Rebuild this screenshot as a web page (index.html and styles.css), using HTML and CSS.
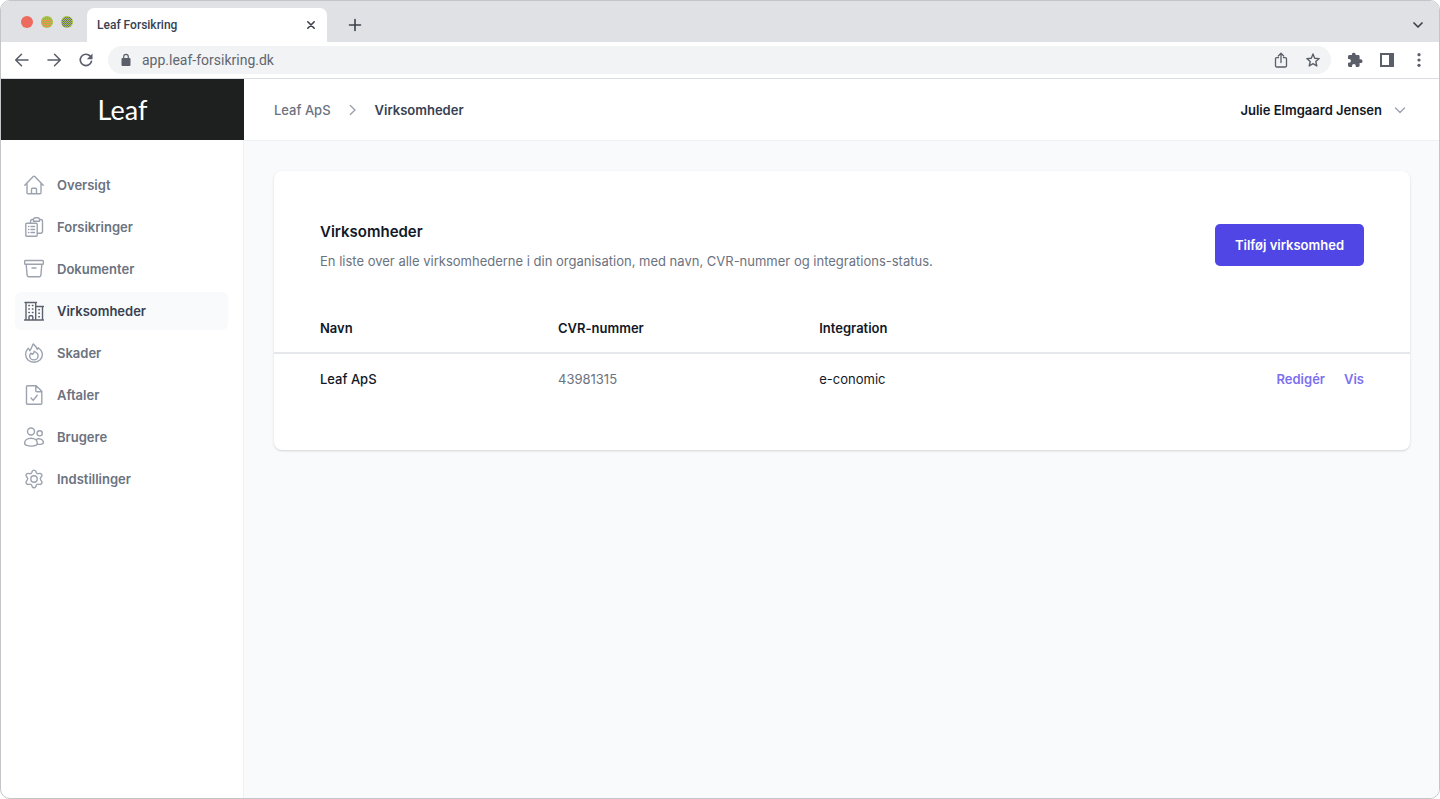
FILE: index.html
```html
<!DOCTYPE html>
<html lang="da">
<head>
<meta charset="utf-8">
<title>Leaf Forsikring</title>
<link rel="stylesheet" href="styles.css">
</head>
<body>
<div class="window">
  <div class="tabstrip">
    <div class="lights">
      <svg width="12" height="12" viewBox="0 0 12 12" aria-hidden="true"><circle cx="6" cy="6" r="6" fill="#ed6a5e" stroke="none"/></svg>
      <svg width="12" height="12" viewBox="0 0 12 12" aria-hidden="true"><circle cx="6" cy="6" r="6" fill="#a9bf48" stroke="none"/><path d="M4 1.500h5M2 2.500h7M2 3.500h9M1 4.500h9M2 5.500h9M1 6.500h9M2 7.500h9M1 8.500h9M2 9.500h8M3 10.500h5" stroke="#e98a55" stroke-width="1" stroke-linecap="butt" stroke-dasharray="1 1"/></svg>
      <svg width="12" height="12" viewBox="0 0 12 12" aria-hidden="true"><circle cx="6" cy="6" r="6" fill="#a9bf48" stroke="none"/><path d="M4 1.500h5M3 2.500h7M2 3.500h9M1 4.500h9M2 5.500h9M1 6.500h9M2 7.500h9M1 8.500h9M2 9.500h8M3 10.500h5" stroke="#6b7280" stroke-width="1" stroke-linecap="butt" stroke-dasharray="1 1"/></svg>
    </div>
    <div class="tab">
      <span class="tab-title">Leaf Forsikring</span>
      <button class="icon-button" type="button" aria-label="Luk fane"><svg width="10" height="10" viewBox="0 0 10 10"><path d="M1.800 1.800l6.400 6.400m0-6.400l-6.400 6.400" stroke-width="1.600"/></svg></button>
    </div>
    <button class="icon-button new-tab" type="button" aria-label="Ny fane"><svg width="14" height="14" viewBox="0 0 14 14"><path d="M7 1.500v11M1.500 7h11" stroke-width="1.600"/></svg></button>
    <button class="icon-button tab-search" type="button" aria-label="Søg i faner"><svg width="12" height="12" viewBox="0 0 12 12"><path d="M2 4l4 4 4-4" stroke-width="1.700"/></svg></button>
  </div>
  <div class="toolbar">
    <button class="icon-button" type="button" aria-label="Tilbage"><svg width="16" height="16" viewBox="0 0 16 16"><path d="M14 8H2M7.500 2.200L1.700 8l5.800 5.800" stroke-width="1.500"/></svg></button>
    <button class="icon-button" type="button" aria-label="Frem"><svg width="16" height="16" viewBox="0 0 16 16"><path d="M2 8h12M8.500 2.200L14.300 8l-5.800 5.800" stroke-width="1.500"/></svg></button>
    <button class="icon-button" type="button" aria-label="Genindlæs"><svg width="16" height="16" viewBox="0 0 16 16"><path d="M13.500 9.300A5.700 5.700 0 1 1 12.200 4.100L13.300 5.300" stroke-width="1.600"/><path class="solid" d="M14.500 1.500v5.700H8.800z"/></svg></button>
    <div class="address">
      <svg width="10" height="14" viewBox="0 0 10 14" aria-hidden="true"><path class="solid" d="M1.500 5h7a1 1 0 0 1 1 1v6a1 1 0 0 1-1 1h-7a1 1 0 0 1-1-1V6a1 1 0 0 1 1-1z"/><path d="M2.700 6V3.700a2.300 2.300 0 0 1 4.600 0V6" stroke-width="1.200"/></svg>
      <input class="url" type="text" value="app.leaf-forsikring.dk" aria-label="Adresse">
      <button class="icon-button" type="button" aria-label="Del"><svg width="16" height="16" viewBox="0 0 16 16"><path d="M5.500 5.700H3.700a1.200 1.200 0 0 0-1.200 1.200v6.900A1.200 1.200 0 0 0 3.700 15h8.600a1.200 1.200 0 0 0 1.200-1.200V6.900a1.200 1.200 0 0 0-1.200-1.200h-1.800M8 10.500V1.500M5.300 4L8 1.300 10.700 4" stroke-width="1.300"/></svg></button>
      <button class="icon-button" type="button" aria-label="Bogmærk"><svg width="16" height="16" viewBox="0 0 16 16"><path d="M8 2l1.700 4.200 4.500.4-3.400 3 1 4.400L8 11.700 4.200 14l1-4.400-3.400-3 4.500-.4z" stroke-width="1.400"/></svg></button>
    </div>
    <button class="icon-button" type="button" aria-label="Udvidelser"><svg width="16" height="16" viewBox="0 0 16 16"><path class="solid" d="M13.700 7.300h-1.100V4.400A1.400 1.400 0 0 0 11.200 3H8.600V2.100a1.900 1.900 0 0 0-3.700 0V3H2.300A1.400 1.400 0 0 0 1 4.400v2.500h1a1.900 1.900 0 0 1 0 3.900H1v2.700a1.400 1.400 0 0 0 1.300 1.400H5v-1a1.900 1.900 0 0 1 3.800 0v1h2.400a1.400 1.400 0 0 0 1.400-1.400V11h1.100a1.850 1.850 0 0 0 0-3.700z"/></svg></button>
    <button class="icon-button" type="button" aria-label="Sidepanel"><svg width="16" height="16" viewBox="0 0 16 16"><path d="M2 2h12v12H2z" stroke-width="2" stroke-linejoin="miter"/><path class="solid" d="M10 1h5v14h-5z"/></svg></button>
    <button class="icon-button" type="button" aria-label="Menu"><svg width="16" height="16" viewBox="0 0 16 16"><g class="solid"><circle cx="8" cy="2.700" r="1.600"/><circle cx="8" cy="8" r="1.600"/><circle cx="8" cy="13.300" r="1.600"/></g></svg></button>
  </div>

  <div class="app">
    <aside class="sidebar">
      <a class="brand" href="#">Leaf</a>
      <nav class="nav" aria-label="Hovedmenu">
        <a class="nav-item" href="#"><svg viewBox="0 0 20 20"><path d="M.8 10.300L9.200 1.600a1.100 1.100 0 0 1 1.600 0l8.400 8.700M3 8.500v9.300a1 1 0 0 0 1 1h12a1 1 0 0 0 1-1V8.500M7.500 18.800v-4.500a1 1 0 0 1 1-1h3a1 1 0 0 1 1 1v4.500"/></svg>Oversigt</a>
        <a class="nav-item" href="#"><svg viewBox="0 0 20 20"><path d="M2.800 6.200h9.400a1 1 0 0 1 1 1v11.100a1 1 0 0 1-1 1H2.800a1 1 0 0 1-1-1V7.200a1 1 0 0 1 1-1zM6.500 6.200V4.500a2 2 0 0 1 2-2h1M13.200 16.300h3.300a2 2 0 0 0 2-2V4.500a2 2 0 0 0-2-2h-1M9.500 4.200V2.500A1.700 1.700 0 0 1 11.200.8h2.600a1.700 1.700 0 0 1 1.700 1.700v1.700zM4.500 9.500h.4M7 9.500h3.500M4.500 12.500h.4M7 12.500h3.500M4.500 15.500h.4M7 15.500h3.500"/></svg>Forsikringer</a>
        <a class="nav-item" href="#"><svg viewBox="0 0 20 20"><path d="M1.300 1.500h17.400a.7.700 0 0 1 .7.700v2.400a.7.700 0 0 1-.7.700H1.300a.7.700 0 0 1-.7-.7V2.200a.7.700 0 0 1 .7-.7zM2.200 5.300l.9 11a1.500 1.500 0 0 0 1.500 1.400h10.800a1.500 1.500 0 0 0 1.500-1.400l.9-11M8 9h4"/></svg>Dokumenter</a>
        <a class="nav-item is-active" href="#" aria-current="page"><svg viewBox="0 0 20 20"><path d="M.5 19h19M1 1.500h11.500M2 1.500V19M11.700 1.500V19M11.700 5.500h7.800M18.500 5.500V19M5 19v-3.300a1 1 0 0 1 1-1h1.800a1 1 0 0 1 1 1V19"/><path d="M4.800 4.500h.6M8.400 4.500h.6M4.800 8h.6M8.400 8h.6M4.800 11.500h.6M8.400 11.500h.6M14.800 8.700h.6M14.800 12.200h.6M14.800 15.700h.6"/></svg>Virksomheder</a>
        <a class="nav-item" href="#"><svg viewBox="0 0 20 20"><path d="M10 19.200c-4.800 0-8.400-3.400-8.400-7.900 0-2.600 1.300-4.600 2.600-6.100 1 .8 1.500 1.700 1.700 2.700C7.200 6.300 8 3.500 9.100.9c2.600 2 3.400 3.700 4.200 5.500.4-.5.700-1 .9-1.700 2.600 1.900 4.200 4.100 4.200 6.900 0 4.300-3.800 7.600-8.400 7.600z"/><path d="M10.200 8.300c2.300 1 3.900 2.600 3.900 4.400a4.200 4.200 0 0 1-8.400 0c0-1 .4-1.800 1.100-2.500.6.200 1 .6 1.300 1.200 1.200-.5 2-1.600 2.100-3.100z"/></svg>Skader</a>
        <a class="nav-item" href="#"><svg viewBox="0 0 20 20"><path d="M3.500.8h8.700l5.600 5.500v11.900a1 1 0 0 1-1 1H3.500a1 1 0 0 1-1-1V1.800a1 1 0 0 1 1-1zM11.800.8v5a1 1 0 0 0 1 1h5M7 13l2.200 2.400 4-5.200"/></svg>Aftaler</a>
        <a class="nav-item" href="#"><svg viewBox="0 0 20 20"><circle cx="7" cy="4.500" r="3.500"/><circle cx="15.700" cy="6.300" r="2.600"/><path d="M.6 16.300c0-3 2.900-5 6.400-5s6.300 2 6.300 5c0 1.800-3.200 2.800-6.300 2.800S.6 18.100.6 16.300zM12 12.500c2.800-1.600 7.400-.4 7.400 3 0 1.500-2.800 2.100-6.100 1.700"/></svg>Brugere</a>
        <a class="nav-item" href="#"><svg viewBox="0 0 20 20"><circle cx="10" cy="10" r="3.200"/><path d="M8.200 2.300a2 2 0 0 1 3.600 0l.4 1.100a2 2 0 0 0 2.300 1.200l1.200-.2a2 2 0 0 1 1.900 3.100l-.8 1a2 2 0 0 0 0 2.600l.8 1.100a2 2 0 0 1-1.900 3.200l-1.200-.2a2 2 0 0 0-2.300 1.300l-.4 1.100a2 2 0 0 1-3.600 0l-.4-1.100a2 2 0 0 0-2.300-1.300l-1.200.2a2 2 0 0 1-1.900-3.200l.8-1.100a2 2 0 0 0 0-2.600l-.8-1a2 2 0 0 1 1.900-3.100l1.200.2a2 2 0 0 0 2.300-1.200z"/></svg>Indstillinger</a>
      </nav>
    </aside>

    <div class="content">
      <header class="topbar">
        <nav class="crumbs" aria-label="Brødkrumme">
          <a class="crumb" href="#">Leaf ApS</a>
          <svg width="10" height="12" viewBox="0 0 10 12" aria-hidden="true"><path d="M2.300 1.500L7 6l-4.700 4.500" stroke-width="1.400"/></svg>
          <a class="crumb is-current" href="#" aria-current="page">Virksomheder</a>
        </nav>
        <button class="user" type="button">Julie Elmgaard Jensen<svg width="12" height="12" viewBox="0 0 12 12" aria-hidden="true"><path d="M1.500 4L6 8.500 10.500 4" stroke-width="1.400"/></svg></button>
      </header>
      <main class="main">
        <section class="card">
          <div class="card-head">
            <div>
              <h1 class="title">Virksomheder</h1>
              <p class="lead">En liste over alle virksomhederne i din organisation, med navn, CVR-nummer og integrations-status.</p>
            </div>
            <button class="primary" type="button">Tilføj virksomhed</button>
          </div>
          <table class="companies">
            <thead><tr><th class="col-name" scope="col">Navn</th><th class="col-cvr" scope="col">CVR-nummer</th><th scope="col">Integration</th><td class="actions"></td></tr></thead>
            <tbody><tr><td class="name">Leaf ApS</td><td class="cvr">43981315</td><td>e-conomic</td><td class="actions"><a class="action" href="#">Redigér</a><a class="action" href="#">Vis</a></td></tr></tbody>
          </table>
        </section>
      </main>
    </div>
  </div>
</div>
</body>
</html>
```
FILE: styles.css
```css
* { box-sizing: border-box; }

body {
  margin: 0;
  background: #fff;
  color: #111827;
  font: 13px/20px Inter, "Liberation Sans", sans-serif;
}

a { color: inherit; text-decoration: none; }
button { padding: 0; border: 0; background: none; color: inherit; font: inherit; }
svg { flex: none; fill: none; stroke: currentColor; stroke-linecap: round; stroke-linejoin: round; }
.solid { fill: currentColor; stroke: none; }

.window {
  display: flex;
  flex-direction: column;
  min-height: 100vh;
  border: 1px solid #c4c5c8;
  border-radius: 10px;
  overflow: hidden;
}

/* Browser chrome */
.tabstrip {
  display: flex;
  align-items: center;
  height: 41px;
  padding: 7px 15px 0 20px;
  background: #dfe1e5;
  color: #3c4049;
}
.lights { display: flex; gap: 8px; width: 66px; padding-bottom: 6px; }
.tab {
  display: flex;
  align-items: center;
  justify-content: space-between;
  align-self: stretch;
  width: 240px;
  padding: 0 11px 0 10px;
  border-radius: 7px 7px 0 0;
  background: #fff;
}
.tab-title { color: #374151; font: 500 12px/16px Roboto, sans-serif; }
.icon-button { display: flex; align-items: center; justify-content: center; }
.new-tab { margin-left: 21px; }
.tab-search { margin-left: auto; }
.toolbar {
  display: flex;
  align-items: center;
  gap: 16px;
  padding: 4px 12px 4px 13px;
  border-bottom: 1px solid #dcdde2;
  color: #5a5e68;
}
.address {
  display: flex;
  flex: 1;
  align-items: center;
  gap: 16px;
  height: 28px;
  margin-left: -2px;
  padding: 0 10px 0 13px;
  border-radius: 14px;
  background: #f1f3f5;
}
.url {
  flex: 1;
  min-width: 0;
  margin-left: -5px;
  padding: 0;
  border: 0;
  outline: 0;
  background: transparent;
  color: #62666f;
  font: 14px/20px Roboto, sans-serif;
}

/* App shell */
.app { display: flex; flex: 1; }
.sidebar { width: 243px; flex: none; border-right: 1px solid #f0f1f3; }
.brand {
  display: flex;
  align-items: center;
  justify-content: center;
  height: 61px;
  margin-right: -1px;
  background: #1e201f;
  color: #fff;
  font: 27px/32px Lato, sans-serif;
}
.nav { display: flex; flex-direction: column; gap: 4px; padding: 26px 15px 0 14px; }
.nav-item {
  display: flex;
  align-items: center;
  gap: 13px;
  height: 38px;
  padding: 0 9px;
  border-radius: 6px;
  color: #6b7280;
  font-weight: 600;
}
.nav-item svg { width: 20px; height: 20px; stroke: #9ca3af; stroke-width: 1.4; }
.nav-item.is-active { background: #f9fafb; color: #374151; }
.nav-item.is-active svg { stroke: #5d636e; }

.content { display: flex; flex: 1; flex-direction: column; min-width: 0; background: #f9fafb; }
.topbar {
  display: flex;
  align-items: center;
  justify-content: space-between;
  height: 62px;
  padding: 1px 33px 0 30px;
  border-bottom: 1px solid #eff1f3;
  background: #fff;
}
.crumbs { display: flex; align-items: center; gap: 17px; color: #9ca3af; }
.crumb { color: #6b7280; font-weight: 500; }
.crumb.is-current { color: #374151; font-weight: 600; }
.user { display: flex; align-items: center; gap: 12px; font-weight: 600; }
.user svg { color: #9ca3af; }

.main { padding: 30px 29px 30px 30px; }
.card {
  padding: 51px 0 46px;
  border-radius: 8px;
  background: #fff;
  box-shadow: 0 1px 3px rgba(0, 0, 0, .1), 0 1px 2px rgba(0, 0, 0, .06);
}
.card-head {
  display: flex;
  align-items: flex-start;
  justify-content: space-between;
  padding: 0 46px;
}
.title { margin: 0; font-size: 15px; line-height: 20px; font-weight: 600; }
.lead { margin: 9px 0 0; color: #6b7280; }
.primary {
  height: 42px;
  margin-top: 2px;
  padding: 0 20px;
  border-radius: 5px;
  background: #4f46e5;
  color: #fff;
  font-weight: 600;
}

.companies { width: 100%; margin-top: 31px; border-collapse: collapse; text-align: left; }
.companies th, .companies td { padding: 15px 0; }
.companies thead th, .companies thead td { padding: 16px 0 14px; border-bottom: 2px solid #e5e7eb; }
.companies th { font-weight: 600; }
.companies tr > :first-child { padding-left: 46px; }
.companies tr > :last-child { padding-right: 46px; }
.col-name { width: 25%; }
.col-cvr { width: 23%; }
.name { font-weight: 500; }
.cvr { color: #6b7280; }
.actions { text-align: right; }
.action { margin-left: 19px; color: #7c6ff0; font-weight: 600; }
```
